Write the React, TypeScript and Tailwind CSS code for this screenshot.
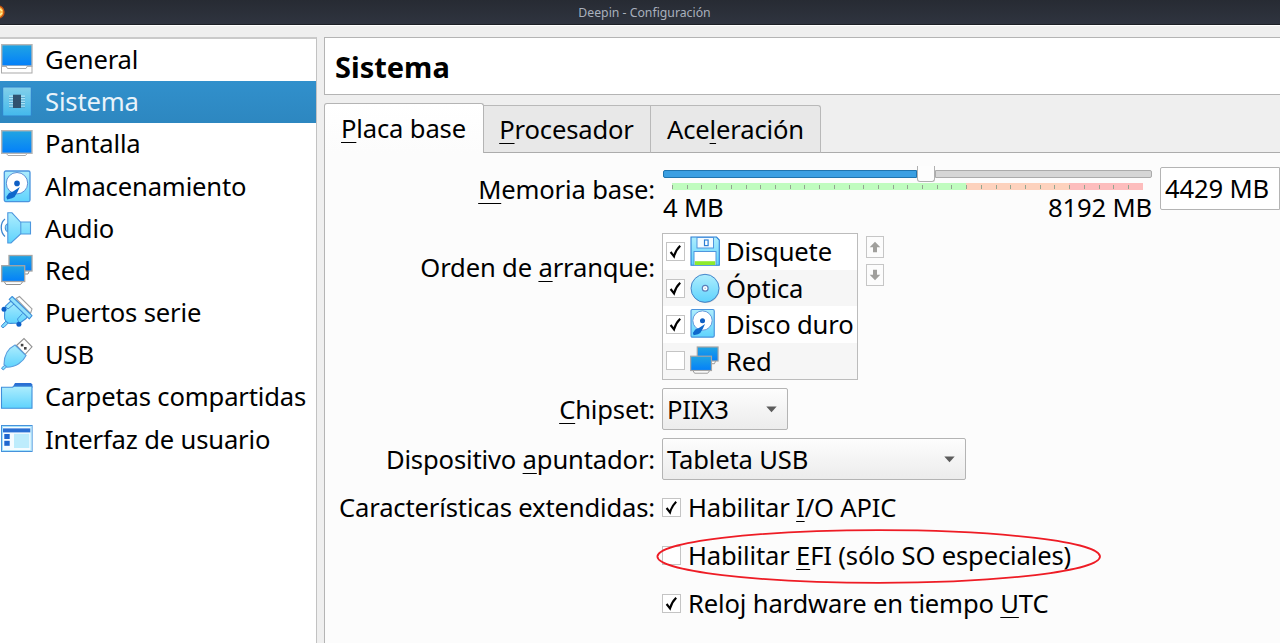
import type { ReactNode } from "react";

type IconProps = { className?: string };

function Defs() {
  return (
    <svg className="absolute h-0 w-0" aria-hidden="true">
      <defs>
        <linearGradient id="screen" x1="0" y1="0" x2="0" y2="1">
          <stop offset="0" stopColor="#21a5e2" />
          <stop offset="1" stopColor="#037ffa" />
        </linearGradient>
        <linearGradient id="sky" x1="0" y1="0" x2="0" y2="1">
          <stop offset="0" stopColor="#aeedfd" />
          <stop offset="1" stopColor="#5fd3fd" />
        </linearGradient>
        <linearGradient id="chip" x1="0" y1="0" x2="0" y2="1">
          <stop offset="0" stopColor="#83d0ea" />
          <stop offset="1" stopColor="#43b9ec" />
        </linearGradient>
      </defs>
    </svg>
  );
}

const cell = "h-[42px] w-[34px] shrink-0";

function GeneralIcon() {
  return (
    <svg viewBox="0 0 34 42" className={cell}>
      <rect x="1.5" y="27.5" width="30.5" height="6.5" fill="#fff" stroke="#a9a9a9" />
      <rect x="1.7" y="5.7" width="30.3" height="21.3" fill="url(#screen)" stroke="#b5b5b5" strokeWidth="1.4" />
      <path d="M6 27 L7.5 29.5 H26 L27.5 27" fill="#fff" stroke="#a9a9a9" />
    </svg>
  );
}

function ChipIcon() {
  return (
    <svg viewBox="0 0 34 42" className={cell}>
      <rect x="2.7" y="6" width="28.6" height="29" rx="1" fill="url(#chip)" stroke="#2e83cb" />
      <path d="M9 15.2h16M9 17.7h16M9 20.2h16M9 22.7h16M9 25.2h16" stroke="#a9e3f7" strokeWidth="1.5" />
      <path d="M9 16.4h16M9 18.9h16M9 21.4h16M9 23.9h16M9 26.2h16" stroke="#4a93bb" strokeWidth=".6" />
      <rect x="13" y="13.7" width="8" height="13.3" fill="#30526f" />
    </svg>
  );
}

function ScreenIcon() {
  return (
    <svg viewBox="0 0 34 42" className={cell}>
      <path d="M6 30 L8 32.5 H25.5 L27.5 30" fill="#fff" stroke="#a9a9a9" />
      <rect x="1.7" y="7.7" width="30.3" height="22.6" fill="url(#screen)" stroke="#b5b5b5" strokeWidth="1.4" />
    </svg>
  );
}

function DiskIcon({ className = cell }: IconProps) {
  return (
    <svg viewBox="0 0 34 42" className={className}>
      <rect x="4.3" y="5" width="25.7" height="30.6" rx="1.5" fill="url(#sky)" stroke="#4a94de" strokeWidth="1.3" />
      <circle cx="17" cy="17.2" r="10.7" fill="#fff" stroke="#5b8fd6" strokeWidth="1" />
      <path d="M6.3 31 L9 27 L13 25.4 L19.8 21 L17.5 26 L14.5 31 L12 32.3 L7.2 33.4 Z" fill="#0f68cc" />
      <circle cx="17" cy="17.4" r="2.8" fill="#0f5fc4" />
    </svg>
  );
}

function AudioIcon() {
  return (
    <svg viewBox="0 0 34 42" className={cell}>
      <path d="M5 11 C0 14.5 0 24.5 5 28.5" fill="none" stroke="#3e86cf" strokeWidth="1.3" />
      <path d="M7.5 15.5 C4.5 17 4.5 22.5 7.5 24 Z" fill="#7ed4fb" stroke="#3e86cf" />
      <path d="M7.8 4.8 H12 L20.5 14 H30.5 V26 H20.5 L11 35 H7.8 Z" fill="url(#sky)" stroke="#4d97de" strokeWidth="1.1" />
      <path d="M20.8 14 V26" stroke="#4d97de" />
    </svg>
  );
}

function NetIcon({ className = cell }: IconProps) {
  return (
    <svg viewBox="0 0 34 42" className={className}>
      <path d="M25 20.5 H29.5 L28 24 H25" fill="#fff" stroke="#8f8f8f" />
      <rect x="9" y="5.5" width="23" height="15.5" fill="url(#screen)" stroke="#a5a5a5" strokeWidth="1.3" />
      <path d="M4.5 32 L6 34.5 H20.5 L22.5 32" fill="#fff" stroke="#8f8f8f" />
      <rect x="1.7" y="15.7" width="23" height="15.8" fill="url(#screen)" stroke="#a5a5a5" strokeWidth="1.3" />
    </svg>
  );
}

function SerialIcon() {
  return (
    <svg viewBox="0 0 34 42" className={cell}>
      <path d="M16 6.5 L19.5 4.5 L32 16.8 L30.5 21.5 Z" fill="#fff" stroke="#a0a0a0" strokeWidth="1.1" />
      <path d="M1.5 33.8 L6.5 28.5 L8.8 30.5 L4 35.3 C2.5 36 1 35 1.5 33.8 Z" fill="#7fdbfd" stroke="#3c88d4" />
      <path d="M11 9 L5.5 14 C4 17 5 21 4.5 24 C4 28 7 32 11 31.4 C15 31 17 31.5 20 31 L26 26.5 L27.5 24.5 Z" fill="url(#sky)" stroke="#3f91db" strokeWidth="1.1" />
      <path d="M5.5 14.3 L8 17 L14 12 M18.5 30 L17.5 27 L22.5 21.5" fill="none" stroke="#3f91db" strokeWidth="1" />
      <circle cx="4" cy="17.3" r="2.5" fill="#0d5fc7" />
      <circle cx="18.9" cy="32.2" r="2.5" fill="#0d5fc7" />
      <path d="M9.2 7.3 L12.2 4.5 L32 23.6 L29.3 26.9 Z" fill="#93e2fc" stroke="#3f91db" strokeWidth="1.1" strokeLinejoin="round" />
    </svg>
  );
}

function UsbIcon() {
  return (
    <svg viewBox="0 0 34 42" className={cell}>
      <path d="M16.5 11.5 L24 4.5 L32 12.8 L25 20.5 Z" fill="#fff" stroke="#929292" strokeWidth="1.1" />
      <rect x="20.8" y="9.8" width="2.6" height="2.6" fill="#444" />
      <rect x="24" y="13" width="2.6" height="2.6" fill="#444" />
      <path d="M5 31 L1.5 34 L3.2 36 L7 32.5 Z" fill="#82dcfd" stroke="#3f91db" />
      <path d="M15 11 L26 21.5 C23 28 16 33 7 33.2 L4 30.5 C4 22 8 14.5 15 11 Z" fill="url(#sky)" stroke="#5a9fdf" strokeWidth="1.1" />
    </svg>
  );
}

function FolderIcon() {
  return (
    <svg viewBox="0 0 34 42" className={cell}>
      <path d="M12.5 11.5 L15 7 H31 L32.3 8.5 V12 H12.5 Z" fill="#2a6fd3" />
      <path d="M1.5 11.3 H12.3 L14.3 10.3 H32 V32.3 H1.5 Z" fill="url(#sky)" stroke="#3f8fdb" strokeWidth="1.1" />
    </svg>
  );
}

function WindowIcon() {
  return (
    <svg viewBox="0 0 34 42" className={cell}>
      <rect x="1.5" y="7.5" width="30.6" height="26" fill="#f6fcff" stroke="#4692dc" />
      <rect x="2.5" y="8.5" width="28.6" height="24" fill="none" stroke="#a5e2fb" />
      <rect x="3" y="10.4" width="27.3" height="4" fill="#2a6fd3" />
      <rect x="4.3" y="16" width="5.4" height="5" fill="#1f67cf" />
      <rect x="4.3" y="22.8" width="5.4" height="5" fill="#1f67cf" />
      <rect x="14" y="15.8" width="15.3" height="14.2" fill="#bdecfc" />
    </svg>
  );
}

function FloppyIcon() {
  return (
    <svg viewBox="0 0 30 31" className="h-[31px] w-[30px] shrink-0">
      <path d="M1 1 H26.5 L29.3 4 V29.3 H1 Z" fill="url(#sky)" stroke="#2d7fd4" strokeWidth="1.1" />
      <rect x="7" y="1.5" width="16.5" height="10.5" fill="#f6fcff" stroke="#4f96de" />
      <rect x="14.5" y="4" width="3.6" height="5.6" fill="#fff" stroke="#2d7fd4" strokeWidth="1.2" />
      <rect x="4" y="15.5" width="22" height="13.8" fill="#fff" stroke="#4f96de" />
      <rect x="4.8" y="25.2" width="20.4" height="3.8" fill="#8fea2e" />
    </svg>
  );
}

function OpticalIcon() {
  return (
    <svg viewBox="0 0 30 31" className="h-[31px] w-[30px] shrink-0">
      <circle cx="15.4" cy="16" r="14" fill="#b9c4cc" />
      <circle cx="15" cy="15.3" r="14" fill="url(#sky)" stroke="#4585ca" />
      <circle cx="15.2" cy="15.3" r="2.9" fill="#fff" stroke="#5a7fba" strokeWidth="1.2" />
      <circle cx="15.2" cy="15.3" r=".8" fill="#9dbfe2" />
    </svg>
  );
}

function Key({ children }: { children: ReactNode }) {
  return (
    <span className="underline decoration-[1.4px] underline-offset-[4px] [text-decoration-skip-ink:none]">
      {children}
    </span>
  );
}

function Check({ on = true }: { on?: boolean }) {
  return (
    <span className="flex h-[19px] w-[19px] shrink-0 border border-[#c4c4c4] bg-white">
      {on && (
        <svg viewBox="0 0 17 17" className="h-[17px] w-[17px]">
          <path d="M3.6 9 L7 13.4 C8 9.5 10 6 13.2 2.8" fill="none" stroke="#000" strokeWidth="2.1" />
        </svg>
      )}
    </span>
  );
}

const sections = [
  { name: "General", icon: <GeneralIcon /> },
  { name: "Sistema", icon: <ChipIcon />, active: true },
  { name: "Pantalla", icon: <ScreenIcon /> },
  { name: "Almacenamiento", icon: <DiskIcon /> },
  { name: "Audio", icon: <AudioIcon /> },
  { name: "Red", icon: <NetIcon /> },
  { name: "Puertos serie", icon: <SerialIcon /> },
  { name: "USB", icon: <UsbIcon /> },
  { name: "Carpetas compartidas", icon: <FolderIcon /> },
  { name: "Interfaz de usuario", icon: <WindowIcon /> },
];

const bootOrder = [
  { name: "Disquete", icon: <FloppyIcon />, on: true },
  { name: "Óptica", icon: <OpticalIcon />, on: true },
  { name: "Disco duro", icon: <DiskIcon className="-ml-[3px] mr-[2px] h-[38px] w-[31px] shrink-0" />, on: true },
  { name: "Red", icon: <NetIcon className="-ml-px h-[38px] w-[31px] shrink-0" />, on: false },
];

function Label({ children }: { children: ReactNode }) {
  return <div className="w-[330px] shrink-0 pt-[1.5px] text-right">{children}</div>;
}

function ArrowButton({ down = false }: { down?: boolean }) {
  return (
    <button className="flex h-[22px] w-[18px] items-center justify-center border border-[#c6c6c6] bg-[#fcfcfc]">
      <svg viewBox="0 0 12 12" className={down ? "h-3 w-3 rotate-180" : "h-3 w-3"}>
        <path d="M6 .8 L11.3 6.3 H8 V11.3 H4 V6.3 H.7 Z" fill="#a09f9c" />
      </svg>
    </button>
  );
}

function Select({ value, className }: { value: string; className: string }) {
  return (
    <div className={`flex h-[42px] items-center justify-between rounded-[2px] border border-[#b4b4b4] bg-linear-to-b from-[#fdfdfd] to-[#ececec] pl-1 pr-[10px] ${className}`}>
      <span className="pt-[1.5px]">{value}</span>
      <svg viewBox="0 0 11 7" className="h-[7px] w-[11px]">
        <path d="M.3 .5 H10.7 L5.5 6.2 Z" fill="#5c5c5c" />
      </svg>
    </div>
  );
}

function MemorySlider() {
  return (
    <div className="ml-[8px] w-[489px] shrink-0 pt-[13px]">
      <div className="flex h-[17px] items-start">
        <div className="mt-[4px] h-[8px] w-[254px] rounded-l-[2px] border border-[#1f74ae] bg-[#3a9fe2]" />
        <div className="h-[16px] w-[18px] rounded-b-[3px] border border-t-0 border-[#b0b0b0] bg-[#fdfdfd]" />
        <div className="mt-[4px] h-[8px] flex-1 rounded-r-[2px] border border-[#ababab] bg-[#d6d6d6]" />
      </div>
      <svg viewBox="0 0 471 7" className="ml-[9px] h-[7px] w-[471px]">
        <rect width="294" height="7" fill="#c0fcbf" />
        <rect x="294" width="103" height="7" fill="#fdd2bd" />
        <rect x="397" width="74" height="7" fill="#fdbdbd" />
        {Array.from({ length: 32 }, (_, i) => (
          <rect key={i} x={Math.round(i * 14.71)} y="2" width="1" height="4" fill="#93a590" />
        ))}
      </svg>
      <div className="flex justify-between leading-[36px]">
        <span>4 MB</span>
        <span>8192 MB</span>
      </div>
    </div>
  );
}

export default function App() {
  return (
    <div className="flex h-[643px] w-[1280px] flex-col overflow-hidden bg-[#efefef] text-[25.6px] leading-none tracking-[-0.16px] text-black [font-family:'Noto_Sans',sans-serif]">
      <Defs />
      <header className="flex h-[25px] shrink-0 items-center border-b border-[#1d2026] bg-linear-to-b from-[#272b33] to-[#2f343f]">
        <svg viewBox="0 0 6 16" className="h-4 w-[6px]">
          <circle cx="-2" cy="8" r="6" fill="#ffb545" stroke="#c4520f" strokeWidth="1.4" />
          <path d="M0 5 L2 7 M0 11 L2 9" stroke="#fff3a0" strokeWidth="1.3" />
        </svg>
        <h1 className="flex-1 pl-[3px] pt-[2px] text-center text-[12.25px] tracking-normal text-[#a9b0bd]">Deepin - Configuración</h1>
      </header>

      <div className="flex min-h-0 flex-1 border-t border-white pt-[11px]">
        <nav className="w-[317px] shrink-0 border-r border-t-2 border-[#c2c2c2] border-t-[#cacaca] bg-white">
          {sections.map((s) => (
            <div
              key={s.name}
              className={
                s.active
                  ? "flex h-[42.17px] items-center bg-linear-to-b from-[#3190cc] to-[#2d87c0] text-[#e9f3fa]"
                  : "flex h-[42.17px] items-center"
              }
            >
              {s.icon}
              <span className="ml-[11px] whitespace-nowrap pb-[0.3px]">{s.name}</span>
            </div>
          ))}
        </nav>

        <main className="ml-[7px] flex min-w-0 flex-1 flex-col">
          <h2 className="flex h-[58px] shrink-0 items-center border border-r-0 border-[#b4b4b4] bg-white pl-[10px] text-[29px] font-bold tracking-normal">
            Sistema
          </h2>

          <div className="mt-[8px] flex h-[50px] shrink-0 items-end">
            <div className="flex h-[50px] w-[160px] items-center justify-center rounded-t-[3px] border border-b-0 border-[#b4b4b4] bg-linear-to-b from-white to-[#fcfcfc] pr-px pt-px">
              <span><Key>P</Key>laca base</span>
            </div>
            <div className="flex h-[48px] w-[167px] items-center justify-center border-b border-r border-t border-[#b9b9b9] border-b-[#acacac] bg-[#e8e8e8] pr-px pt-[2px]">
              <span><Key>P</Key>rocesador</span>
            </div>
            <div className="flex h-[48px] w-[170px] items-center justify-center rounded-tr-[3px] border-b border-r border-t border-[#b9b9b9] border-b-[#acacac] bg-[#e8e8e8] pt-[2px]">
              <span>Ace<Key>l</Key>eración</span>
            </div>
            <div className="h-px flex-1 bg-[#acacac]" />
          </div>

          <section className="flex min-h-0 flex-1 flex-col whitespace-nowrap border-l border-[#b4b4b4] bg-[#fcfcfc]">
            <div className="flex h-[79px] shrink-0">
              <div className="pt-[22px]"><Label><Key>M</Key>emoria base:</Label></div>
              <MemorySlider />
              <div className="ml-[8px] mt-[14px] flex h-[43px] w-[120px] shrink-0 items-center rounded-l-[2px] border border-[#b4b4b4] bg-white pl-1 pt-px">
                4429 MB
              </div>
            </div>

            <div className="flex h-[148px] shrink-0 pt-[0.5px]">
              <div className="pt-[21px]"><Label>Orden de <Key>a</Key>rranque:</Label></div>
              <div className="ml-[7px] flex w-[196px] flex-col border border-[#bcbcbc]">
                {bootOrder.map((b) => (
                  <div key={b.name} className="flex h-[36.5px] items-center overflow-hidden bg-white pl-[3px] even:bg-[#f6f6f6]">
                    <Check on={b.on} />
                    <div className="ml-[5px] flex w-[30px] items-center">{b.icon}</div>
                    <span className="ml-[6px] pt-[1.2px]">{b.name}</span>
                  </div>
                ))}
              </div>
              <div className="ml-[8px] flex flex-col gap-[6px] pt-[3px]">
                <ArrowButton />
                <ArrowButton down />
              </div>
            </div>

            <div className="mt-[8px] flex shrink-0 items-center">
              <Label><Key>C</Key>hipset:</Label>
              <Select value="PIIX3" className="ml-[7px] w-[126px]" />
            </div>
            <div className="mt-[8px] flex shrink-0 items-center">
              <Label>Dispositivo <Key>a</Key>puntador:</Label>
              <Select value="Tableta USB" className="ml-[7px] w-[304px]" />
            </div>

            <div className="mt-[3px] flex h-[48px] shrink-0 items-center">
              <Label>Características extendidas:</Label>
              <div className="ml-[7px] flex items-center gap-[7px]">
                <Check />
                <span className="pt-[1.5px]">Habilitar <Key>I</Key>/O APIC</span>
              </div>
            </div>
            <div className="relative ml-[337px] flex h-[48px] shrink-0 items-center gap-[7px]">
              <Check on={false} />
              <span className="pt-[1.5px]">Habilitar <Key>E</Key>FI (sólo SO especiales)</span>
              <svg viewBox="0 0 446 56" className="absolute -left-[6px] -top-[3px] h-[56px] w-[446px]">
                <ellipse cx="222.7" cy="28.5" rx="221.3" ry="26.3" fill="none" stroke="#ee1c25" strokeWidth="1.8" />
              </svg>
            </div>
            <div className="ml-[337px] flex h-[48px] shrink-0 items-center gap-[7px]">
              <Check />
              <span className="pt-[1.5px]">Reloj hardware en tiempo <Key>U</Key>TC</span>
            </div>
          </section>
        </main>
      </div>
    </div>
  );
}
